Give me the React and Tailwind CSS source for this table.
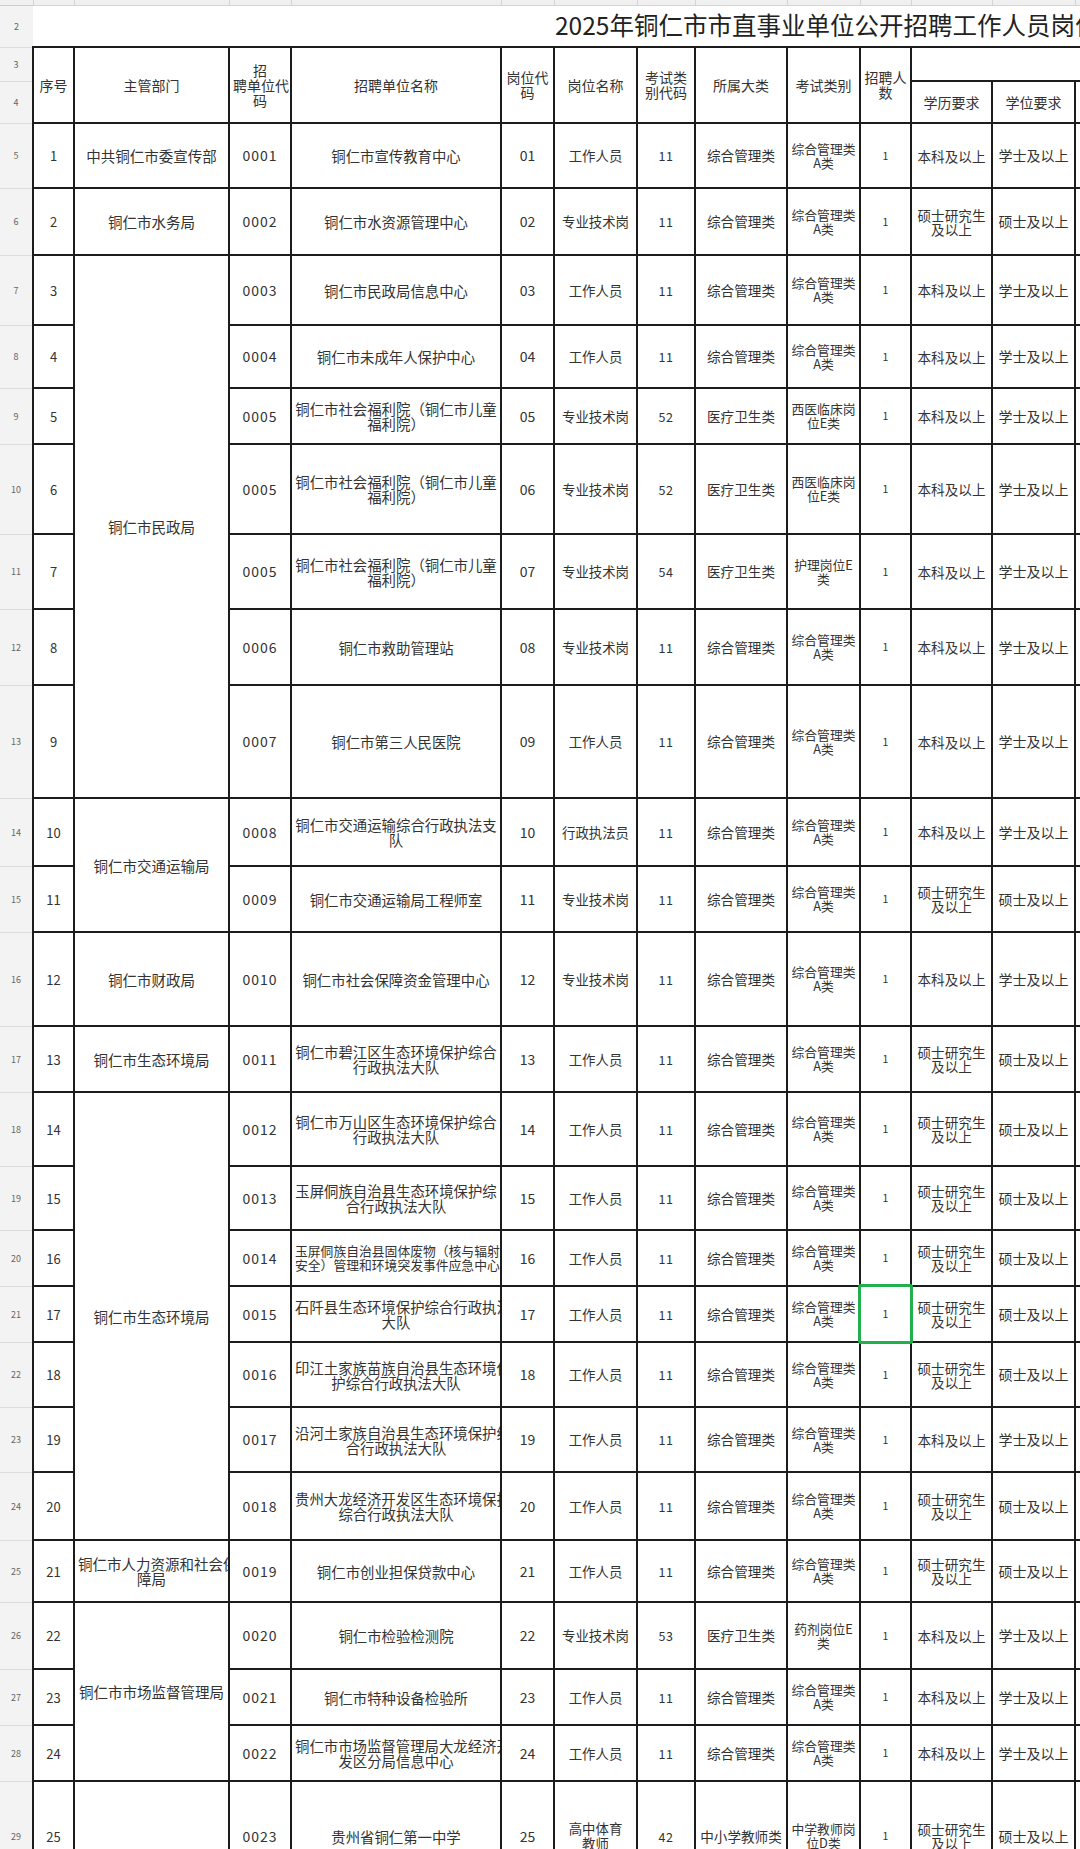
import React from 'react';

const A = ['综合管理类', 'A类'];
const BK = ['本科及以上'];
const XS = ['学士及以上'];
const SS = ['硕士研究生', '及以上'];
const SD = ['硕士及以上'];
const FL = ['铜仁市社会福利院（铜仁市儿童', '福利院）'];

const r = (n, h, seq, dept, code, name, pc, pos, ec, cat, exam, edu, deg, opts = {}) => ({
  n, h, seq, dept, code, name, pc, pos, ec, cat, exam, edu, deg, ...opts,
});

const rows = [
  r(5, 'h-[65px]', '1', [['中共铜仁市委宣传部'], 1], '0001', ['铜仁市宣传教育中心'], '01', ['工作人员'], '11', '综合管理类', A, BK, XS),
  r(6, 'h-[67px]', '2', [['铜仁市水务局'], 1], '0002', ['铜仁市水资源管理中心'], '02', ['专业技术岗'], '11', '综合管理类', A, SS, SD),
  r(7, 'h-[70px]', '3', [['铜仁市民政局'], 7], '0003', ['铜仁市民政局信息中心'], '03', ['工作人员'], '11', '综合管理类', A, BK, XS),
  r(8, 'h-[63px]', '4', null, '0004', ['铜仁市未成年人保护中心'], '04', ['工作人员'], '11', '综合管理类', A, BK, XS),
  r(9, 'h-[56px]', '5', null, '0005', FL, '05', ['专业技术岗'], '52', '医疗卫生类', ['西医临床岗', '位E类'], BK, XS),
  r(10, 'h-[90px]', '6', null, '0005', FL, '06', ['专业技术岗'], '52', '医疗卫生类', ['西医临床岗', '位E类'], BK, XS),
  r(11, 'h-[75px]', '7', null, '0005', FL, '07', ['专业技术岗'], '54', '医疗卫生类', ['护理岗位E', '类'], BK, XS),
  r(12, 'h-[76px]', '8', null, '0006', ['铜仁市救助管理站'], '08', ['专业技术岗'], '11', '综合管理类', A, BK, XS),
  r(13, 'h-[113px]', '9', null, '0007', ['铜仁市第三人民医院'], '09', ['工作人员'], '11', '综合管理类', A, BK, XS),
  r(14, 'h-[68px]', '10', [['铜仁市交通运输局'], 2], '0008', ['铜仁市交通运输综合行政执法支', '队'], '10', ['行政执法员'], '11', '综合管理类', A, BK, XS),
  r(15, 'h-[66px]', '11', null, '0009', ['铜仁市交通运输局工程师室'], '11', ['专业技术岗'], '11', '综合管理类', A, SS, SD),
  r(16, 'h-[94px]', '12', [['铜仁市财政局'], 1], '0010', ['铜仁市社会保障资金管理中心'], '12', ['专业技术岗'], '11', '综合管理类', A, BK, XS),
  r(17, 'h-[66px]', '13', [['铜仁市生态环境局'], 1], '0011', ['铜仁市碧江区生态环境保护综合', '行政执法大队'], '13', ['工作人员'], '11', '综合管理类', A, SS, SD),
  r(18, 'h-[74px]', '14', [['铜仁市生态环境局'], 7], '0012', ['铜仁市万山区生态环境保护综合', '行政执法大队'], '14', ['工作人员'], '11', '综合管理类', A, SS, SD),
  r(19, 'h-[64px]', '15', null, '0013', ['玉屏侗族自治县生态环境保护综', '合行政执法大队'], '15', ['工作人员'], '11', '综合管理类', A, SS, SD),
  r(20, 'h-[56px]', '16', null, '0014', ['玉屏侗族自治县固体废物（核与辐射', '安全）管理和环境突发事件应急中心'], '16', ['工作人员'], '11', '综合管理类', A, SS, SD, { small: true }),
  r(21, 'h-[56px]', '17', null, '0015', ['石阡县生态环境保护综合行政执法', '大队'], '17', ['工作人员'], '11', '综合管理类', A, SS, SD, { selected: true }),
  r(22, 'h-[65px]', '18', null, '0016', ['印江土家族苗族自治县生态环境保', '护综合行政执法大队'], '18', ['工作人员'], '11', '综合管理类', A, SS, SD),
  r(23, 'h-[65px]', '19', null, '0017', ['沿河土家族自治县生态环境保护综', '合行政执法大队'], '19', ['工作人员'], '11', '综合管理类', A, BK, XS),
  r(24, 'h-[68px]', '20', null, '0018', ['贵州大龙经济开发区生态环境保护', '综合行政执法大队'], '20', ['工作人员'], '11', '综合管理类', A, SS, SD),
  r(25, 'h-[62px]', '21', [['铜仁市人力资源和社会保', '障局'], 1], '0019', ['铜仁市创业担保贷款中心'], '21', ['工作人员'], '11', '综合管理类', A, SS, SD),
  r(26, 'h-[67px]', '22', [['铜仁市市场监督管理局'], 3], '0020', ['铜仁市检验检测院'], '22', ['专业技术岗'], '53', '医疗卫生类', ['药剂岗位E', '类'], BK, XS),
  r(27, 'h-[56px]', '23', null, '0021', ['铜仁市特种设备检验所'], '23', ['工作人员'], '11', '综合管理类', A, BK, XS),
  r(28, 'h-[56px]', '24', null, '0022', ['铜仁市市场监督管理局大龙经济开', '发区分局信息中心'], '24', ['工作人员'], '11', '综合管理类', A, BK, XS),
  r(29, 'h-[110px]', '25', [[''], 1], '0023', ['贵州省铜仁第一中学'], '25', ['高中体育', '教师'], '42', '中小学教师类', ['中学教师岗', '位D类'], SS, SD),
];

const widths = [
  'w-[33px]', 'w-[41px]', 'w-[155px]', 'w-[62px]', 'w-[210px]', 'w-[53px]', 'w-[83px]',
  'w-[58px]', 'w-[92px]', 'w-[73px]', 'w-[51px]', 'w-[81px]', 'w-[83px]', 'w-[80px]',
];

const line = 'border-2 border-[#1c1c1c]';

// one spreadsheet cell; with clip, long lines run past the right edge and are cut there
function Cell({ lines, size = 'text-[13.5px]', lead = 'leading-[15px]', rowSpan, colSpan, clip = false, extra = '' }) {
  return (
    <td rowSpan={rowSpan} colSpan={colSpan} className={`${line} p-0 align-middle text-[#333] ${extra}`}>
      <div className={`${clip ? 'overflow-x-clip' : ''} px-[3px] text-center ${size} ${lead}`}>
        {lines.map((l, i) => (
          <div key={i} className="whitespace-nowrap">{l}</div>
        ))}
      </div>
    </td>
  );
}

function RowHead({ n }) {
  return (
    <td className="border-b border-[#dcdcdc] bg-[#f3f3f3] p-0 text-center align-middle text-[9px] leading-none text-[#666]">
      {n}
    </td>
  );
}

export default function App() {
  return (
    <div className="h-[1849px] w-[1080px] overflow-hidden bg-white font-['Noto_Sans_CJK_SC','Noto_Sans',sans-serif]">
      <table className="w-[1155px] table-fixed border-collapse">
        <colgroup>
          {widths.map((w, i) => (
            <col key={i} className={w} />
          ))}
        </colgroup>
        <tbody>
          <tr className="h-[5px]">
            <td className="border-b border-[#cfcfcf] bg-[#f0f0f0] p-0" />
            {widths.slice(1).map((w, i) => (
              <td key={i} className="border-b border-l border-[#d4d4d4] bg-[#f0f0f0] p-0" />
            ))}
          </tr>
          <tr className="h-[42px]">
            <RowHead n="2" />
            <td colSpan={13} className="p-0 align-top">
              <div className="whitespace-nowrap pl-[522px] pt-[4px] text-[24.5px] leading-[30px] text-[#222]">
                2025年铜仁市市直事业单位公开招聘工作人员岗位一览表
              </div>
            </td>
          </tr>
          <tr className="h-[34px]">
            <RowHead n="3" />
            <Cell rowSpan={2} size="text-[14px]" lines={['序号']} />
            <Cell rowSpan={2} size="text-[14px]" lines={['主管部门']} />
            <Cell rowSpan={2} size="text-[14px]" lines={['招', '聘单位代', '码']} />
            <Cell rowSpan={2} size="text-[14px]" lines={['招聘单位名称']} />
            <Cell rowSpan={2} size="text-[14px]" lines={['岗位代', '码']} />
            <Cell rowSpan={2} size="text-[14px]" lines={['岗位名称']} />
            <Cell rowSpan={2} size="text-[14px]" lines={['考试类', '别代码']} />
            <Cell rowSpan={2} size="text-[14px]" lines={['所属大类']} />
            <Cell rowSpan={2} size="text-[14px]" lines={['考试类别']} />
            <Cell rowSpan={2} size="text-[14px]" lines={['招聘人', '数']} />
            <Cell colSpan={3} lines={['']} />
          </tr>
          <tr className="h-[42px]">
            <RowHead n="4" />
            <Cell size="text-[14px]" lines={['学历要求']} />
            <Cell size="text-[14px]" lines={['学位要求']} />
            <Cell lines={['']} />
          </tr>
          {rows.map((row) => (
            <tr key={row.n} className={row.h}>
              <RowHead n={row.n} />
              <Cell size="text-[13px]" lines={[row.seq]} />
              {row.dept && (
                <Cell clip rowSpan={row.dept[1]} size="text-[14.5px]" lines={row.dept[0]} />
              )}
              <Cell size="text-[14px]" extra="tracking-[1px]" lines={[row.code]} />
              <Cell
                clip
                size={row.small ? 'text-[12.8px]' : 'text-[14.4px]'}
                lead={row.small ? 'leading-[14px]' : 'leading-[15px]'}
                lines={row.name}
              />
              <Cell size="text-[14px]" lines={[row.pc]} />
              <Cell size="text-[13.4px]" lines={row.pos} />
              <Cell size="text-[12.5px]" extra="tracking-[0.5px]" lines={[row.ec]} />
              <Cell size="text-[13.6px]" lines={[row.cat]} />
              <Cell size="text-[12.8px]" lead="leading-[14px]" lines={row.exam} />
              <td className={`${line} relative p-0 text-center align-middle text-[10.5px] text-[#333]`}>
                1
                {row.selected && (
                  <div className="absolute -inset-[3px] z-10 rounded-[3px] border-[3px] border-[#22b04f]" />
                )}
              </td>
              <Cell size="text-[13.6px]" lead="leading-[14px]" lines={row.edu} />
              <Cell size="text-[14px]" lines={row.deg} />
              <Cell lines={['']} />
            </tr>
          ))}
        </tbody>
      </table>
    </div>
  );
}
